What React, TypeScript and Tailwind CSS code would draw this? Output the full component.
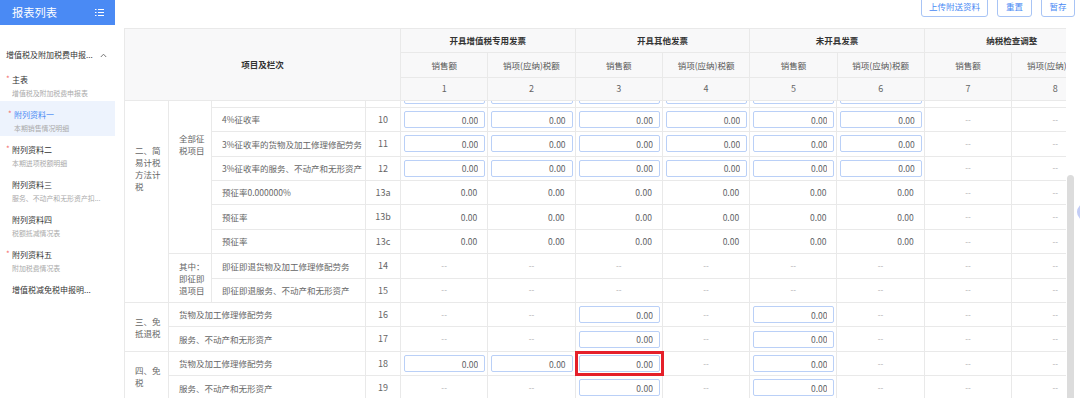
import React, { useLayoutEffect, useRef } from 'react';

type Cell = 'in' | 'val' | 'dash' | 'hi';

type Row = {
  no: string;
  label: string;
  a?: { lines: string[]; span: number };
  b?: { lines: string[]; span: number };
  wide?: boolean;
  cells: Cell[];
};

const I: Cell = 'in';
const V: Cell = 'val';
const D: Cell = 'dash';
const H: Cell = 'hi';

const all8: Cell[] = [I, I, I, I, I, I, I, I];
const inputs6: Cell[] = [I, I, I, I, I, I, D, D];
const values6: Cell[] = [V, V, V, V, V, V, D, D];
const dashes: Cell[] = [D, D, D, D, D, D, D, D];
const exempt: Cell[] = [D, D, I, D, I, D, D, D];

const rows: Row[] = [
  { no: '1', label: '13%税率的货物及加工修理修配劳务', a: { lines: ['一、一', '般计税', '方法计', '税'], span: 7 }, b: { lines: ['全部征', '税项目'], span: 5 }, cells: all8 },
  { no: '2', label: '13%税率的服务、不动产和无形资产', cells: all8 },
  { no: '3', label: '9%税率的货物及加工修理修配劳务', cells: all8 },
  { no: '4', label: '9%税率的服务、不动产和无形资产', cells: all8 },
  { no: '5', label: '6%税率', cells: all8 },
  { no: '6', label: '即征即退货物及加工修理修配劳务', b: { lines: ['其中：', '即征即', '退项目'], span: 2 }, cells: dashes },
  { no: '7', label: '即征即退服务、不动产和无形资产', cells: dashes },
  { no: '8', label: '6%征收率', a: { lines: ['二、简', '易计税', '方法计', '税'], span: 11 }, b: { lines: ['全部征', '税项目'], span: 9 }, cells: inputs6 },
  { no: '9a', label: '5%征收率的货物及加工修理修配劳务', cells: inputs6 },
  { no: '9b', label: '5%征收率的服务、不动产和无形资产', cells: inputs6 },
  { no: '10', label: '4%征收率', cells: inputs6 },
  { no: '11', label: '3%征收率的货物及加工修理修配劳务', cells: inputs6 },
  { no: '12', label: '3%征收率的服务、不动产和无形资产', cells: inputs6 },
  { no: '13a', label: '预征率0.000000%', cells: values6 },
  { no: '13b', label: '预征率', cells: values6 },
  { no: '13c', label: '预征率', cells: values6 },
  { no: '14', label: '即征即退货物及加工修理修配劳务', b: { lines: ['其中：', '即征即', '退项目'], span: 2 }, cells: dashes },
  { no: '15', label: '即征即退服务、不动产和无形资产', cells: dashes },
  { no: '16', label: '货物及加工修理修配劳务', a: { lines: ['三、免', '抵退税'], span: 2 }, wide: true, cells: exempt },
  { no: '17', label: '服务、不动产和无形资产', wide: true, cells: exempt },
  { no: '18', label: '货物及加工修理修配劳务', a: { lines: ['四、免', '税'], span: 2 }, wide: true, cells: [I, I, H, D, I, D, D, D] },
  { no: '19', label: '服务、不动产和无形资产', wide: true, cells: exempt },
];

const menu = [
  { title: '主表', sub: '增值税及附加税费申报表', star: true },
  { title: '附列资料一', sub: '本期销售情况明细', star: true, active: true },
  { title: '附列资料二', sub: '本期进项税额明细', star: true },
  { title: '附列资料三', sub: '服务、不动产和无形资产扣...' },
  { title: '附列资料四', sub: '税额抵减情况表' },
  { title: '附列资料五', sub: '附加税费情况表', star: true },
  { title: '增值税减免税申报明...' },
];

const groups = ['开具增值税专用发票', '开具其他发票', '未开具发票', '纳税检查调整'];

const bd = 'border border-[#e9e9e9]';

const Cols = () => (
  <colgroup>
    <col className="w-[44px]" />
    <col className="w-[43px]" />
    <col className="w-[154px]" />
    <col className="w-[35px]" />
    {[0, 1, 2, 3, 4, 5, 6, 7].map((i) => (
      <col key={i} className="w-[87.3px]" />
    ))}
  </colgroup>
);

const DataCell = ({ c }: { c: Cell }) => {
  if (c === 'in' || c === 'hi') {
    return (
      <td className={`${bd} pl-[3px] pr-[2px]`}>
        {/* the highlighted field gets a square red frame around it */}
        <div className={c === 'hi' ? 'outline-solid outline-[3px] outline-offset-[1px] outline-[#e5202a]' : ''}>
          <input
            readOnly
            value="0.00"
            className="block w-full min-w-0 h-[17px] border border-[#bad0f7] rounded-[2px] bg-white text-right pr-[6px] text-[8.5px] text-[#606266] outline-none"
          />
        </div>
      </td>
    );
  }
  if (c === 'val') {
    return <td className={`${bd} text-right pr-[10px] text-[8.5px] text-[#606266]`}>0.00</td>;
  }
  return <td className={`${bd} text-center text-[8px] text-[#aaa]`}>--</td>;
};

const Sidebar = () => (
  <aside className="w-[115px] shrink-0 h-full bg-white">
    <div className="h-[25px] bg-[#4a8af4] flex items-center justify-between pl-[12px] pr-[11px]">
      <span className="text-white text-[11.25px] leading-none">报表列表</span>
      <svg width="9" height="7" viewBox="0 0 9 7" fill="white">
        <rect x="0" y="0" width="1.5" height="1" />
        <rect x="3" y="0" width="6" height="1" />
        <rect x="0" y="3" width="1.5" height="1" />
        <rect x="3" y="3" width="6" height="1" />
        <rect x="0" y="6" width="1.5" height="1" />
        <rect x="3" y="6" width="6" height="1" />
      </svg>
    </div>
    <div className="pt-[19px]">
      <div className="h-[22px] flex items-center justify-between pl-[6px] pr-[8px]">
        <span className="text-[8px] text-[#333] whitespace-nowrap">增值税及附加税费申报...</span>
        <svg width="7" height="5" viewBox="0 0 7 5" fill="none" stroke="#777" strokeWidth="1">
          <path d="M0.8 4 L3.5 1.2 L6.2 4" />
        </svg>
      </div>
      {menu.map((m) => (
        <div key={m.title} className={`h-[35px] pt-[8px] ${m.active ? 'bg-[#edf3fd] pl-[8px]' : 'pl-[6px]'}`}>
          <div className="flex h-[12px]">
            <span className="w-[6px] text-[#f56c6c] text-[8px] leading-[10px]">{m.star ? '*' : ''}</span>
            <span className={`text-[8px] leading-[12px] whitespace-nowrap ${m.active ? 'text-[#4a8af4]' : 'text-[#333]'}`}>
              {m.title}
            </span>
          </div>
          {m.sub && (
            <div className="ml-[6px] mt-[2px] text-[6.9px] leading-[10px] text-[#aaa] whitespace-nowrap">{m.sub}</div>
          )}
        </div>
      ))}
    </div>
  </aside>
);

const Btn = ({ w, children }: { w: string; children: React.ReactNode }) => (
  <button className={`${w} h-[22px] shrink-0 border border-[#a8c4f5] rounded-[3px] bg-white text-[8.5px] text-[#4a8af4]`}>
    {children}
  </button>
);

export default function App() {
  const bodyRef = useRef<HTMLDivElement>(null);
  const anchorRef = useRef<HTMLTableRowElement>(null);

  // body is scrolled so that row 10 sits just under the fixed header
  useLayoutEffect(() => {
    if (bodyRef.current && anchorRef.current) {
      bodyRef.current.scrollTop = anchorRef.current.offsetTop - 6;
    }
  }, []);

  return (
    <div className="relative w-[1080px] h-[398px] overflow-hidden flex bg-white font-['Noto_Sans_CJK_SC','Noto_Sans',sans-serif]">
      <Sidebar />

      <div className="flex-1 min-w-0 flex flex-col">
        <div className="h-[28px] shrink-0 flex items-end justify-end gap-[9px] pr-[5px] pb-[11px]">
          <Btn w="w-[67px]">上传附送资料</Btn>
          <Btn w="w-[35px]">重置</Btn>
          <Btn w="w-[34px]">暂存</Btn>
        </div>

        <div className="flex-1 min-h-0 flex">
          <div className="flex-1 min-w-0 pl-[9px] flex flex-col overflow-hidden">
            <table className="table-fixed w-[974.4px] shrink-0 bg-[#f8f8f9]">
              <Cols />
              <thead>
                <tr className="h-[24px]">
                  <th colSpan={4} rowSpan={3} className={`${bd} text-[8.5px] font-bold text-[#333]`}>
                    项目及栏次
                  </th>
                  {groups.map((g) => (
                    <th key={g} colSpan={2} className={`${bd} text-[8.5px] font-bold text-[#333]`}>
                      {g}
                    </th>
                  ))}
                </tr>
                <tr className="h-[25px]">
                  {[0, 1, 2, 3, 4, 5, 6, 7].map((i) => (
                    <th key={i} className={`${bd} text-[8.5px] font-normal text-[#555] whitespace-nowrap`}>
                      {i % 2 === 0 ? '销售额' : '销项(应纳)税额'}
                    </th>
                  ))}
                </tr>
                <tr className="h-[23px]">
                  {[1, 2, 3, 4, 5, 6, 7, 8].map((n) => (
                    <th key={n} className={`${bd} text-[9px] font-normal text-[#666]`}>
                      {n}
                    </th>
                  ))}
                </tr>
              </thead>
            </table>

            <div ref={bodyRef} className="flex-1 min-h-0 overflow-hidden">
              <table className="table-fixed w-[974.4px] bg-white">
                <Cols />
                <tbody>
                  {rows.map((r) => (
                    <tr key={r.no} ref={r.no === '10' ? anchorRef : undefined} className="h-[24.4px]">
                      {r.a && (
                        <td rowSpan={r.a.span} className={`${bd} pl-[10px] pr-[6px] text-[8.5px] leading-[12px] text-[#666]`}>
                          {r.a.lines.map((l, i) => (
                            <div key={i}>{l}</div>
                          ))}
                        </td>
                      )}
                      {r.b && (
                        <td rowSpan={r.b.span} className={`${bd} pl-[10px] pr-[6px] text-[8.5px] leading-[12px] text-[#666]`}>
                          {r.b.lines.map((l, i) => (
                            <div key={i}>{l}</div>
                          ))}
                        </td>
                      )}
                      <td colSpan={r.wide ? 2 : 1} className={`${bd} pl-[10px] text-[8.5px] text-[#666] whitespace-nowrap`}>
                        {r.label}
                      </td>
                      <td className={`${bd} text-center text-[9px] text-[#666]`}>{r.no}</td>
                      {r.cells.map((c, i) => (
                        <DataCell key={i} c={c} />
                      ))}
                    </tr>
                  ))}
                </tbody>
              </table>
            </div>
          </div>

          <div className="w-[14px] shrink-0">
            <div className="ml-[1px] mt-[147px] w-[7px] h-[260px] rounded-full bg-[#dcdcdc]" />
          </div>
        </div>
      </div>

      <div className="absolute left-[1077px] top-[203px] w-[18px] h-[18px] rounded-full bg-[#c3cdf6]" />
    </div>
  );
}
